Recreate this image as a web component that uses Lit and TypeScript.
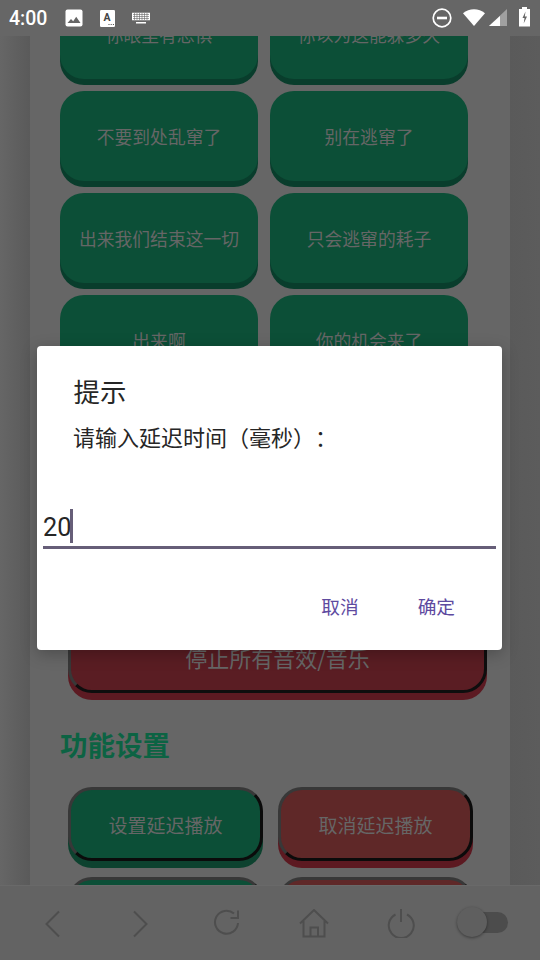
import { LitElement, html, css } from "lit";
import { customElement } from "lit/decorators.js";

const rows = [
  ["你眼里有恐惧", "你以为这能躲多久"],
  ["不要到处乱窜了", "别在逃窜了"],
  ["出来我们结束这一切", "只会逃窜的耗子"],
  ["出来啊", "你的机会来了"],
];

@customElement("app-root")
export class AppRoot extends LitElement {
  static styles = css`
    :host {
      display: block;
      width: 540px;
      height: 960px;
      position: relative;
      overflow: hidden;
      font-family: "Noto Sans CJK SC", "Noto Sans", sans-serif;
      background: #666;
      text-spacing-trim: space-all;
    }
    .shell { display: flex; flex-direction: column; height: 960px; }
    .status {
      height: 36px; flex: none; background: #666; display: flex; align-items: center;
      padding: 0 4px 0 9px; color: #fff; position: relative; z-index: 3;
    }
    .time { font: 500 19.5px Roboto, sans-serif; width: 56px; }
    .st-left { display: flex; align-items: center; gap: 17px; }
    .st-right { margin-left: auto; display: flex; align-items: center; height: 36px; }
    .view {
      flex: 1; min-height: 0; overflow: hidden;
      background: linear-gradient(90deg, #666 0, #5a5a5a 30px, #5a5a5a 510px, #5c5c5c 540px);
    }
    .page {
      margin: -47px 30px 0; background: #666; height: 900px;
      padding: 0 30px; box-sizing: border-box;
    }
    .grid { display: grid; grid-template-columns: 198px 198px; column-gap: 12px; row-gap: 6px; }
    .soft {
      height: 90px; border-radius: 24px; background: #0c4f37; color: #666;
      box-shadow: 0 6px 0 #093d2c; font-size: 17.8px;
      display: flex; align-items: center; justify-content: center; margin-bottom: 6px;
      box-sizing: border-box;
    }
    .stop {
      margin: 218px 0 0 8px; width: 419px; height: 84px; box-sizing: border-box;
      background: #5a1d23; border: 3px solid #383838; border-right-color: #0e0e0e; border-bottom-color: #0e0e0e;
      border-radius: 24px; box-shadow: 0 7px 0 #5c1a22; color: #666; font-size: 22px;
      display: flex; align-items: flex-end; justify-content: center; padding-bottom: 17px;
    }
    h2 {
      margin: 33px 0 0; font-size: 27.5px; line-height: 36px; font-weight: 700; color: #0c6343;
    }
    .sets { display: grid; grid-template-columns: 195px 195px; column-gap: 15px; row-gap: 16px; margin: 25px 0 0 8px; }
    .hard {
      height: 74px; box-sizing: border-box; border-radius: 24px; font-size: 19px; color: #666;
      border: 3px solid #383838; border-right-color: #0b0b0b; border-bottom-color: #0b0b0b;
      display: flex; align-items: center; justify-content: center;
    }
    .g { background: #0c4f37; box-shadow: 0 7px 0 #0d422f; }
    .r { background: #5f2828; box-shadow: 0 7px 0 #5c1921; }
    .bar {
      height: 75px; flex: none; background: #636363; border-top: 1px solid #696969; box-sizing: border-box;
      display: flex; align-items: center; position: relative; z-index: 1;
    }
    .bar svg { position: absolute; fill: none; stroke: #4e4e4e; stroke-width: 2; }
    .toggle { position: absolute; left: 457px; top: 26px; width: 51px; height: 21px; border-radius: 11px; background: #4c4c4c; }
    .knob {
      position: absolute; left: 0; top: -5px; width: 30px; height: 30px; border-radius: 50%;
      background: #5f5f5f; box-shadow: 0 1px 3px rgba(0,0,0,.4);
    }
    .dialog {
      position: absolute; left: 37px; top: 346px; width: 465px; height: 304px; background: #fff; border-radius: 4px;
      box-shadow: 0 4px 16px rgba(0,0,0,.25); display: flex; flex-direction: column; z-index: 2;
      box-sizing: border-box;
    }
    .title { font-size: 26.4px; line-height: 36px; color: #262626; margin: 27px 0 0 36.5px; }
    .msg { font-size: 22px; line-height: 32px; color: #262626; margin: 11px 0 0 36px; }
    .input {
      margin: 57px 6px 0; height: 37px; border-bottom: 3px solid #665e78;
      display: flex; align-items: flex-start; font: 25.3px/38px Roboto, sans-serif; color: #262626;
    }
    .caret { width: 3px; height: 34px; background: #665e78; margin: 0 0 0 -1.4px; }
    .actions { margin-top: auto; display: flex; justify-content: flex-end; gap: 59px; padding: 0 47px 26px 0; color: #5e4a9f; font-size: 18.7px; line-height: 36px; }
  `;

  render() {
    return html`
      <div class="shell">
        <div class="status">
          <span class="time">4:00</span>
          <div class="st-left">
            <svg width="18" height="18" viewBox="0 0 18 18">
              <rect x="0.5" y="0.5" width="17" height="17" rx="2" fill="#fff"/>
              <path d="M2.500 14l3.500-4 2.200 2.200 3-4.400 4.300 6.200z" fill="#666"/>
            </svg>
            <svg width="15" height="17" viewBox="0 0 15 17">
              <rect width="15" height="17" rx="1.200" fill="#fff"/>
              <text x="7" y="11" font-family="Roboto, sans-serif" font-weight="700" font-size="10.5" text-anchor="middle" fill="#444">A</text>
              <path d="M8.500 14.500h1M10.700 14.500h1M12.900 14.500h1" stroke="#444" stroke-width="1"/>
            </svg>
            <svg width="20" height="12" viewBox="0 0 20 12" style="margin-left:-1px">
              <path d="M1 0.800h18v7.400H1z M5 10h10v1.500H5z" fill="#fff"/>
              <path d="M2 2.500h16M2 4.500h16M2 6.500h16M3.500 1v7M6 1v7M8.500 1v7M11 1v7M13.500 1v7M16 1v7" stroke="#666" stroke-width=".6"/>
            </svg>
          </div>
          <div class="st-right">
            <svg width="108" height="26" viewBox="428 5 108 26">
              <circle cx="442" cy="18" r="8.800" fill="none" stroke="#fff" stroke-width="1.700"/>
              <rect x="437" y="16.700" width="10" height="2.600" fill="#fff"/>
              <path d="M463 13.200c6.200-5.300 15.800-5.300 22 0L474 26z" fill="#fff"/>
              <path d="M507 9v17h-18z" fill="#a0a0a0"/>
              <path d="M500 16v10h-11z" fill="#fff"/>
              <path d="M522 7h5v2h3v17.500h-11V9h3z" fill="#fff"/>
              <path d="M525.500 11.500l-3 6.500h2l-.8 5.500 3.300-7h-2.200z" fill="#666"/>
            </svg>
          </div>
        </div>
        <div class="view">
          <div class="page">
            <div class="grid">
              ${rows.flat().map((t) => html`<div class="soft">${t}</div>`)}
            </div>
            <div class="stop">停止所有音效/音乐</div>
            <h2>功能设置</h2>
            <div class="sets">
              <div class="hard g">设置延迟播放</div>
              <div class="hard r">取消延迟播放</div>
              <div class="hard g"></div>
              <div class="hard r"></div>
            </div>
          </div>
        </div>
        <div class="bar">
          <svg style="left:44px;top:24px" width="18" height="28" viewBox="0 0 18 28"><path d="M15 1.500L2.500 14 15 26.500"/></svg>
          <svg style="left:131px;top:24px" width="18" height="28" viewBox="0 0 18 28"><path d="M3 1.500L15.500 14 3 26.500"/></svg>
          <svg style="left:213px;top:22px" width="28" height="30" viewBox="0 0 28 30"><path d="M25 15a11.500 11.500 0 1 1-4-9.500M25 2.500v7.500h-7.500"/></svg>
          <svg style="left:299px;top:23px" width="30" height="30" viewBox="0 0 30 30"><path d="M1 14.500L15 1l14 13.500M4.500 12v15.500h21V12M11.500 27.500v-9h7.500v9"/></svg>
          <svg style="left:387px;top:22px" width="28" height="30" viewBox="0 0 28 30"><path d="M8.500 6.500a12.500 12.500 0 1 0 11.500 0M14 1v13"/></svg>
          <div class="toggle"><div class="knob"></div></div>
        </div>
      </div>
      <div class="dialog">
        <div class="title">提示</div>
        <div class="msg">请输入延迟时间（毫秒）：</div>
        <div class="input"><span>20</span><span class="caret"></span></div>
        <div class="actions"><span>取消</span><span>确定</span></div>
      </div>
    `;
  }
}
